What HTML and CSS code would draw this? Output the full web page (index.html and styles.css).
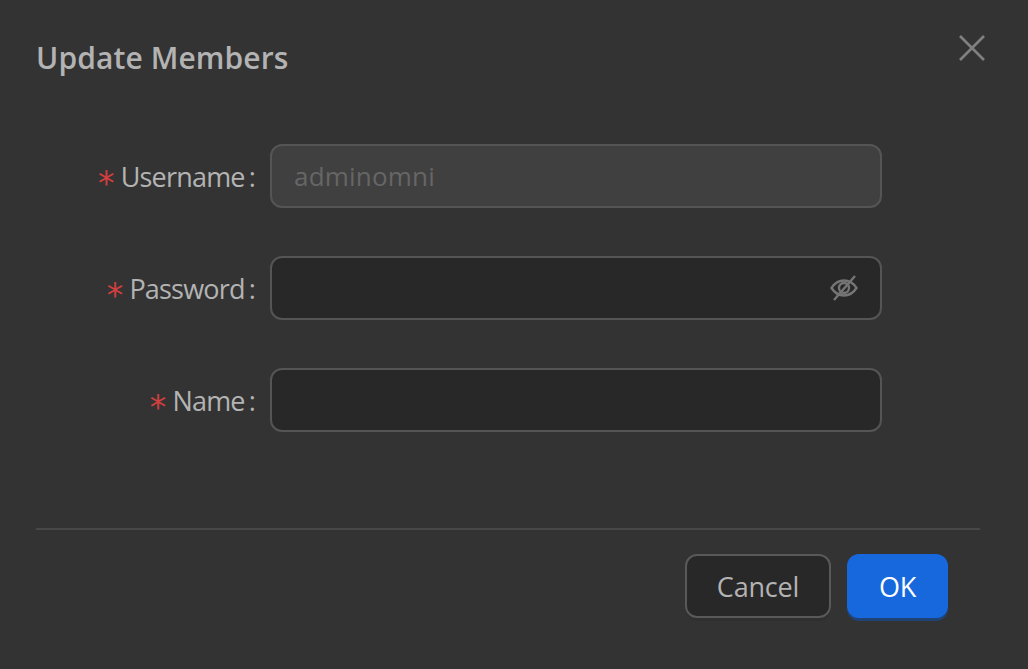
FILE: index.html
```html
<!DOCTYPE html>
<html lang="en">
<head>
    <meta charset="UTF-8">
    <title>Update Members</title>
    <link rel="stylesheet" href="styles.css">
</head>
<body>
    <div class="modal">
        <header class="modal-header">
            <h2>Update Members</h2>
            <button class="close" aria-label="Close">
                <svg width="28" height="28" viewBox="0 0 28 28"><path d="M2 2 L26 26 M26 2 L2 26" stroke="#808080" stroke-width="2.6" fill="none"/></svg>
            </button>
        </header>

        <form class="form">
            <div class="row">
                <label><span class="req">*</span>Username<span class="colon">:</span></label>
                <div class="field disabled"><span>adminomni</span></div>
            </div>
            <div class="row">
                <label><span class="req">*</span>Password<span class="colon">:</span></label>
                <div class="field">
                    <svg class="eye" width="28" height="28" viewBox="0 0 28 28" fill="none" stroke="#757575" stroke-width="2.4">
                        <path d="M1.5 14 C5 8.5 9 6.5 14 6.5 C19 6.5 23 8.5 26.5 14 C23 19.5 19 21.5 14 21.5 C9 21.5 5 19.5 1.5 14 Z"/>
                        <circle cx="14" cy="14" r="5"/>
                        <path d="M25 2 L4 26"/>
                    </svg>
                </div>
            </div>
            <div class="row">
                <label><span class="req">*</span>Name<span class="colon">:</span></label>
                <div class="field"></div>
            </div>
        </form>

        <footer class="modal-footer">
            <button class="btn">Cancel</button>
            <button class="btn primary">OK</button>
        </footer>
    </div>
</body>
</html>
```

FILE: styles.css
```css
* {
    box-sizing: border-box;
}
body {
    margin: 0;
    height: 669px;
    overflow: hidden;
    background-color: #333333;
    font-family: "Open Sans", "Noto Sans", sans-serif;
    color: #b3b3b3;
}
.modal {
    padding: 0 48px 0 36px;
}
.modal-header {
    display: flex;
    justify-content: space-between;
    height: 144px;
    padding-top: 37px;
}
.modal-header h2 {
    margin: 0;
    font-size: 30px;
    line-height: 42px;
    font-weight: 600;
    letter-spacing: 0.1px;
    color: #b3b3b3;
}
.close {
    background: none;
    border: none;
    padding: 0;
    margin: -3px -6px 0 0;
    height: 28px;
    cursor: pointer;
}
.form {
    display: flex;
    flex-direction: column;
    gap: 48px;
}
.row {
    display: flex;
    align-items: center;
}
.row label {
    display: flex;
    align-items: center;
    justify-content: flex-end;
    width: 219px;
    margin-right: 15px;
    font-size: 27px;
    letter-spacing: -0.8px;
    white-space: nowrap;
}
.req {
    font-family: "DejaVu Sans", sans-serif;
    font-size: 33px;
    line-height: 33px;
    margin: 14px 7px 0 0;
    color: #d13f3f;
}
.colon {
    margin-left: 4px;
}
.field {
    display: flex;
    align-items: center;
    justify-content: flex-end;
    width: 612px;
    height: 64px;
    margin-right: 98px;
    padding: 0 22px;
    background-color: #282828;
    border: 2px solid #555555;
    border-radius: 12px;
}
.field.disabled {
    justify-content: flex-start;
    background-color: #404040;
    font-size: 26px;
    letter-spacing: 0.2px;
    color: #666666;
}
.modal-footer {
    display: flex;
    justify-content: flex-end;
    gap: 16px;
    margin-top: 96px;
    padding: 24px 32px 0 0;
    border-top: 2px solid #484848;
}
.btn {
    height: 64px;
    width: 146px;
    font-family: inherit;
    font-size: 27px;
    letter-spacing: -0.2px;
    color: #b3b3b3;
    background-color: #282828;
    border: 2px solid #595959;
    border-radius: 12px;
    box-shadow: 0 3px 0 rgba(0, 0, 0, 0.06);
    cursor: pointer;
}
.btn.primary {
    width: 101px;
    color: #ffffff;
    background-color: #1668dc;
    border-color: #1668dc;
    box-shadow: 0 3px 0 #1f4375;
}
```
